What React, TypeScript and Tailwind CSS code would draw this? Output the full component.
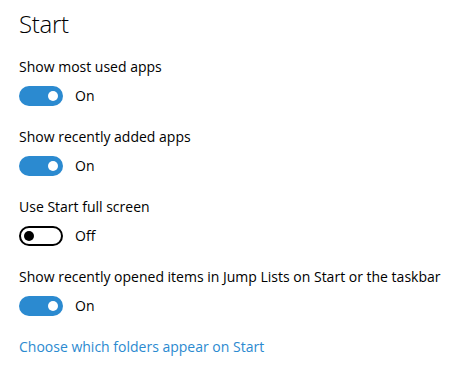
import React from "react";

function Toggle({ on }: { on: boolean }) {
  return (
    <div className="flex items-center h-5">
      {on ? (
        <div className="w-[44px] h-5 rounded-full bg-[#2b8ad0] flex items-center justify-end pr-[5px]">
          <div className="w-[10px] h-[10px] rounded-full bg-white" />
        </div>
      ) : (
        <div className="w-[44px] h-5 rounded-full border-2 border-black flex items-center pl-[3px]">
          <div className="w-[10px] h-[10px] rounded-full bg-black" />
        </div>
      )}
      <span className="ml-3 text-[14px] leading-5 text-black">{on ? "On" : "Off"}</span>
    </div>
  );
}

function Setting({ label, on }: { label: string; on: boolean }) {
  return (
    <div className="flex flex-col">
      <div className="text-[14px] leading-5 text-black whitespace-nowrap">{label}</div>
      <div className="mt-[9px]">
        <Toggle on={on} />
      </div>
    </div>
  );
}

export default function App() {
  return (
    <div
      className="w-[469px] h-[373px] bg-white pl-[19px] pt-[7px] flex flex-col"
      style={{ fontFamily: '"Open Sans", "Noto Sans", sans-serif' }}
    >
      <div className="text-[24px] leading-[34px] font-light tracking-[-0.3px] text-black">Start</div>
      <div className="mt-[16px] flex flex-col gap-[21px]">
        <Setting label="Show most used apps" on={true} />
        <Setting label="Show recently added apps" on={true} />
        <Setting label="Use Start full screen" on={false} />
        <Setting label="Show recently opened items in Jump Lists on Start or the taskbar" on={true} />
        <div className="text-[14px] leading-5 text-[#2b8ad0] whitespace-nowrap">Choose which folders appear on Start</div>
      </div>
    </div>
  );
}
